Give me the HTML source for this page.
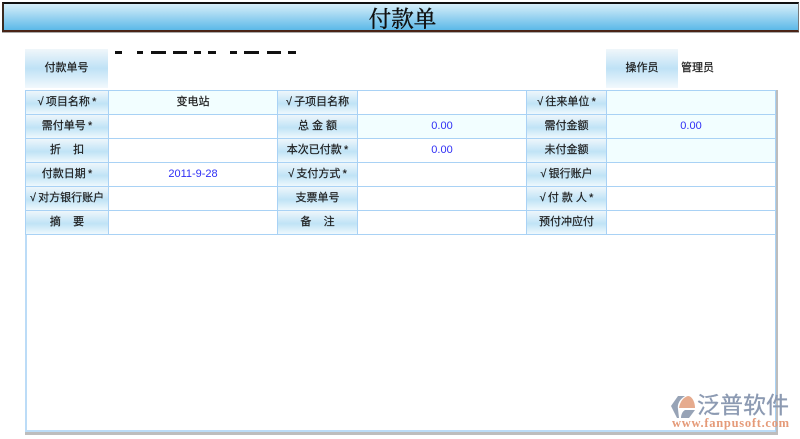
<!DOCTYPE html>
<html lang="zh">
<head>
<meta charset="utf-8">
<style>
html,body{margin:0;padding:0;background:#fff;width:800px;height:439px;overflow:hidden}
body{position:relative;font-family:"Liberation Sans","WenQuanYi Zen Hei","Noto Sans CJK SC",sans-serif;font-size:11px;color:#1c1c1c;filter:blur(.3px);-webkit-text-stroke:.2px #1c1c1c}
div{position:absolute;box-sizing:border-box}
.title{left:2px;top:2px;width:797px;height:30px;border-top:2px solid #111;border-left:2px solid #3a2a20;border-right:1px solid #777;border-bottom:2px solid #4a2416;box-shadow:0 1px 0 #aaa;background:linear-gradient(#d6eef9,#5cb9e8);text-align:center;font:22.5px/31px "Liberation Serif","Noto Serif CJK SC",serif;color:#111;-webkit-text-stroke:.45px #111;padding-left:3px}
.dash{top:51px;height:3px;background:#111}
.head{background:linear-gradient(#f0f6fa,#bfe2f6 50%,#f2f9fd);text-align:center}
.l{background:linear-gradient(#eef6fb,#c0e3f6 55%,#eef8fd);text-align:center;line-height:23px;height:23px;white-space:pre}
.v{text-align:center;line-height:23px;height:23px}
.c{background:#f2feff}
.b{color:#2f2ff5;font-family:"Liberation Sans",sans-serif;font-size:11px;-webkit-text-stroke:0}
.hl{left:25px;width:751px;height:1px;background:#a9d2f5}
.vl{top:90px;width:1px;height:144px;background:#a9d2f5}
</style>
</head>
<body>
<div class="title">付款单</div>

<div class="dash" style="left:115px;width:7px"></div>
<div class="dash" style="left:137px;width:6px"></div>
<div class="dash" style="left:151px;width:15px"></div>
<div class="dash" style="left:173px;width:14px"></div>
<div class="dash" style="left:194px;width:7px"></div>
<div class="dash" style="left:208px;width:8px"></div>
<div class="dash" style="left:230px;width:7px"></div>
<div class="dash" style="left:244px;width:15px"></div>
<div class="dash" style="left:267px;width:14px"></div>
<div class="dash" style="left:288px;width:8px"></div>

<div class="head" style="left:25px;top:49px;width:83px;height:39px;line-height:39px">付款单号</div>
<div class="head" style="left:606px;top:49px;width:72px;height:39px;line-height:39px">操作员</div>
<div style="left:681px;top:49px;line-height:39px">管理员</div>

<div style="left:25px;top:90px;width:751px;height:342px;background:#fff;border-left:2px solid #bcdcf7;border-bottom:2px solid #bcdcf7"></div>
<div style="left:775px;top:90px;width:3px;height:345px;background:#bdbdbd"></div>
<div style="left:25px;top:432px;width:753px;height:3px;background:#bdbdbd"></div>
<div style="left:775px;top:90px;width:1px;height:342px;background:#a9d2f5"></div>

<!-- cyan value cells -->
<div class="v c" style="left:109px;top:91px;width:168px">变电站</div>
<div class="v c" style="left:607px;top:91px;width:168px"></div>
<div class="v c b" style="left:358px;top:115px;width:168px">0.00</div>
<div class="v c b" style="left:607px;top:115px;width:168px">0.00</div>
<div class="v c" style="left:607px;top:139px;width:168px"></div>
<div class="v b" style="left:358px;top:139px;width:168px">0.00</div>
<div class="v b" style="left:109px;top:163px;width:168px">2011-9-28</div>

<!-- column 1 labels -->
<div class="l" style="left:26px;top:91px;width:82px">√&#8201;项目名称&#8201;*</div>
<div class="l" style="left:26px;top:115px;width:82px">需付单号&#8201;*</div>
<div class="l" style="left:26px;top:139px;width:82px">折    扣</div>
<div class="l" style="left:26px;top:163px;width:82px">付款日期&#8201;*</div>
<div class="l" style="left:26px;top:187px;width:82px">√&#8201;对方银行账户</div>
<div class="l" style="left:26px;top:211px;width:82px">摘    要</div>

<!-- column 2 labels -->
<div class="l" style="left:278px;top:91px;width:79px">√&#8201;子项目名称</div>
<div class="l" style="left:278px;top:115px;width:79px">总 金 额</div>
<div class="l" style="left:278px;top:139px;width:79px">本次已付款&#8201;*</div>
<div class="l" style="left:278px;top:163px;width:79px">√&#8201;支付方式&#8201;*</div>
<div class="l" style="left:278px;top:187px;width:79px">支票单号</div>
<div class="l" style="left:278px;top:211px;width:79px">备    注</div>

<!-- column 3 labels -->
<div class="l" style="left:527px;top:91px;width:79px">√&#8201;往来单位&#8201;*</div>
<div class="l" style="left:527px;top:115px;width:79px">需付金额</div>
<div class="l" style="left:527px;top:139px;width:79px">未付金额</div>
<div class="l" style="left:527px;top:163px;width:79px">√&#8201;银行账户</div>
<div class="l" style="left:527px;top:187px;width:79px">√&#8201;付 款 人&#8201;*</div>
<div class="l" style="left:527px;top:211px;width:79px">预付冲应付</div>

<!-- grid lines -->
<div class="hl" style="top:90px"></div>
<div class="hl" style="top:114px"></div>
<div class="hl" style="top:138px"></div>
<div class="hl" style="top:162px"></div>
<div class="hl" style="top:186px"></div>
<div class="hl" style="top:210px"></div>
<div class="hl" style="top:234px"></div>
<div class="vl" style="left:25px"></div>
<div class="vl" style="left:108px"></div>
<div class="vl" style="left:277px"></div>
<div class="vl" style="left:357px"></div>
<div class="vl" style="left:526px"></div>
<div class="vl" style="left:606px"></div>

<!-- logo -->
<svg style="position:absolute;left:670px;top:392px" width="30" height="28" viewBox="0 0 30 28">
<path d="M1 14L8 4H15C10 7 7 12 8 17L9 26H7Z" fill="#97a3b6"/>
<path d="M9 16C10 9 14 5 18 4C22 4 25 10 25 16Z" fill="#e6ab8e"/>
<path d="M11 26C11 22 13 19 15 18H25L19 26Z" fill="#97a3b6"/>
</svg>
<div style="left:697px;top:392px;font:23px/26px 'Liberation Sans','Noto Sans CJK SC',sans-serif;color:#8c9ab2;-webkit-text-stroke:.3px #8c9ab2;white-space:nowrap">泛普软件</div>
<div style="left:672px;top:417px;font:bold 12.5px/13px 'Liberation Serif',serif;color:#e59a78;-webkit-text-stroke:0;white-space:nowrap;letter-spacing:.72px">www.fanpusoft.com</div>
</body>
</html>
